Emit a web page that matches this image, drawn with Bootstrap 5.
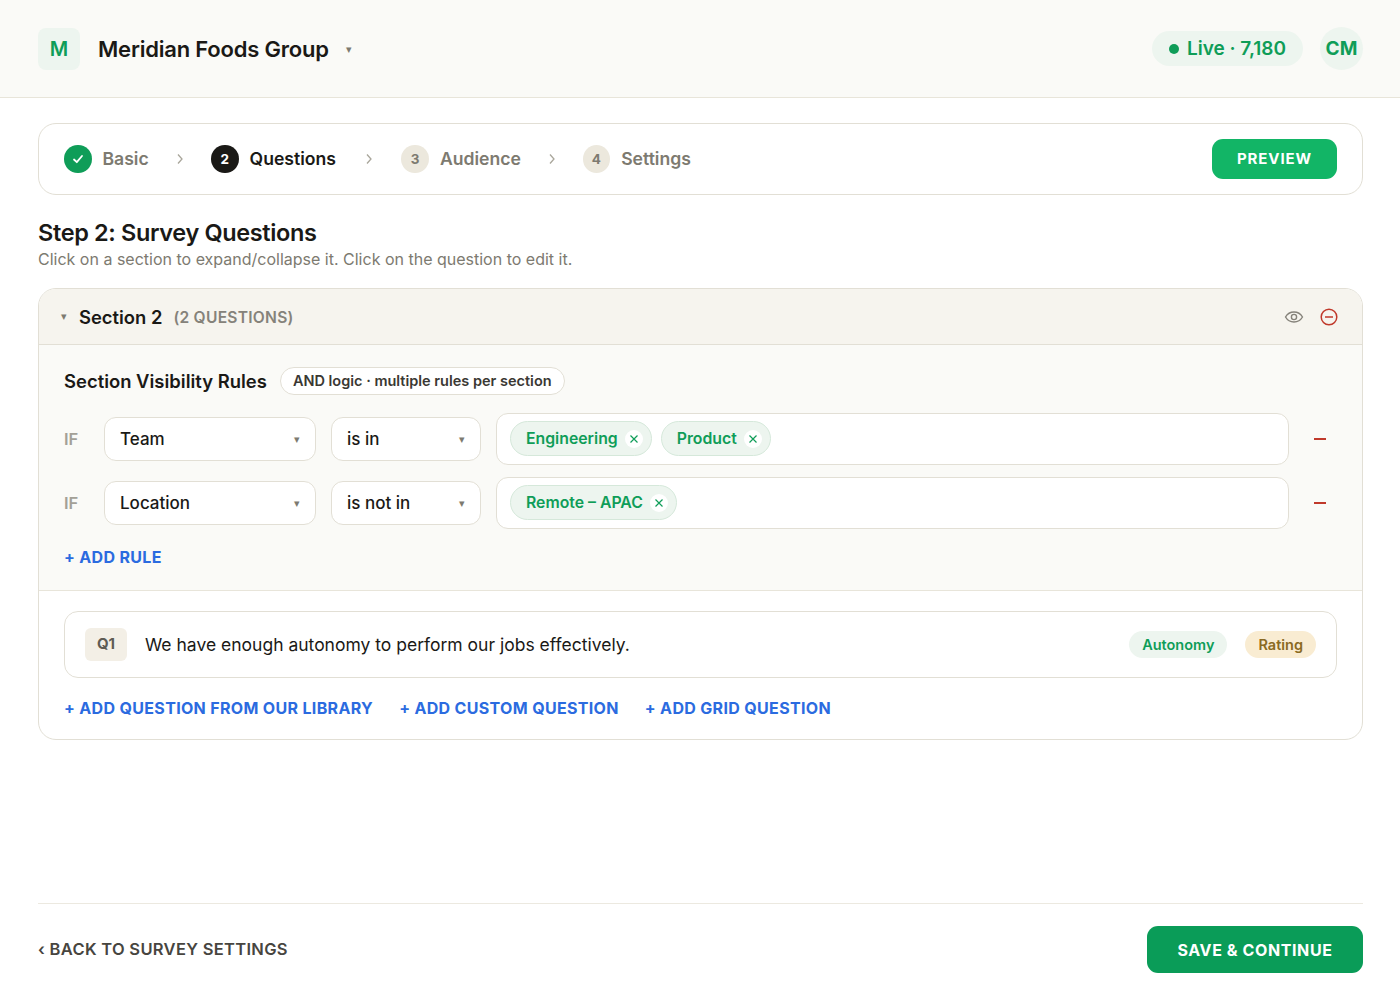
<!DOCTYPE html>
<html lang="en">
<head>
<meta charset="UTF-8">
<title>Survey Questions</title>
<meta name="viewport" content="width=device-width, initial-scale=1">
<link href="https://cdn.jsdelivr.net/npm/bootstrap@5.3.0/dist/css/bootstrap.min.css" rel="stylesheet">
<style>
body { font-family: Inter, "Liberation Sans", sans-serif; color: #1a1916; background: #fff; height: 1000px; overflow: hidden; }
.top-bar { height: 98px; background: #fafaf7; border-bottom: 1px solid #e8e5da; padding: 0 37px 0 38px; }
.logo-box { width: 42px; height: 42px; border-radius: 8px; background: #edf5ef; color: #0f9d58; font-size: 20px; font-weight: 600; }
.org-name { font-size: 22px; font-weight: 600; letter-spacing: -.2px; margin: 2px 0 0 18px; }
.caret-mini { color: #7d7a70; font-size: 11px; line-height: 1; }
.org-caret { margin: 2px 0 0 17px; }
.live-pill { height: 35px; border-radius: 18px; background: #edf5ef; color: #0f9d58; font-size: 19px; font-weight: 600; padding: 1px 17px 0; gap: 8px; margin-right: 17px; }
.live-dot { width: 10px; height: 10px; border-radius: 50%; background: #0f9d58; }
.avatar { width: 43px; height: 43px; border-radius: 50%; background: #edf5ef; color: #0f9d58; font-size: 19px; font-weight: 700; padding-top: 1px; }
.main-wrap { padding: 25px 37px 0 38px; }
.step-card { height: 72px; border: 1px solid #e2dfd5; border-radius: 18px; padding: 0 25px; }
.step-num { width: 27.5px; height: 28px; border-radius: 50%; font-size: 13.5px; font-weight: 700; background: #ece8dd; color: #7d7a70; flex: none; }
.step-num.is-done { background: #0f9d58; color: #fff; }
.step-num.is-now { background: #1a1916; color: #fff; }
.step-name { font-size: 17.6px; font-weight: 600; color: #7d7a70; margin: 0 0 0 11px; }
.step-name.is-now { color: #1a1916; }
.step-sep { color: #a9a69b; margin: 0 27.2px; width: 8px; }
.step-sep.sep-wide { margin: 0 28.7px; }
.step-sep.sep-tight { margin: 0 26.9px; }
.btn-preview { width: 125px; height: 40px; border-radius: 11px; background: #12b566; color: #fff; font-size: 15px; font-weight: 700; letter-spacing: .9px; border: 0; padding: 1px 0 0; }
.page-title { font-size: 23.5px; font-weight: 600; letter-spacing: -.36px; margin: 23px 0 0; line-height: 29px; }
.page-sub { font-size: 16px; color: #7d7a70; line-height: 24px; margin-bottom: 17px; }
.sec-card { border: 1px solid #e2dfd5; border-radius: 18px; height: 452px; overflow: hidden; }
.sec-head { height: 56px; background: #f6f4ee; border-bottom: 1px solid #e2dfd5; padding: 0 23px 0 22px; }
.sec-name { font-size: 18.4px; font-weight: 600; margin: 2px 0 0 12px; }
.sec-count { font-size: 15.6px; font-weight: 600; color: #85827a; letter-spacing: .25px; margin: 2px 0 0 11px; }
.rules-area { height: 246px; background: #fafaf7; border-bottom: 1px solid #e8e5da; padding: 22px 25px 0; }
.rules-head { margin-bottom: 17px; }
.rules-title { font-size: 18.45px; font-weight: 600; margin-top: 1px; }
.logic-pill { height: 28px; border: 1px solid #e2dfd5; border-radius: 14px; background: #fff; font-size: 14.5px; font-weight: 600; color: #3a3833; padding: 0 12px; margin-left: 13px; }
.rule-row { height: 52px; margin-bottom: 12px; }
.if-tag { width: 40px; font-size: 16.5px; font-weight: 600; color: #a3a097; flex: none; padding-top: 1px; }
.fake-select { height: 44px; border: 1px solid #e2dfd5; border-radius: 12px; background: #fff; font-size: 17px; font-weight: 500; padding: 2px 15px 0; flex: none; }
.sel-field { width: 212px; margin-right: 15px; }
.sel-op { width: 150px; margin-right: 15px; }
.tag-box { width: 793px; height: 52px; border: 1px solid #e2dfd5; border-radius: 12px; background: #fff; padding: 0 13px; gap: 9px; flex: none; }
.value-tag { height: 35px; border: 1px solid #d5e8da; border-radius: 18px; background: #edf5ef; color: #0f9d58; font-size: 15.8px; font-weight: 600; padding: 1px 8px 0 15px; gap: 7px; }
.tag-x { width: 18px; height: 18px; border-radius: 50%; background: #fff; }
.rule-del { width: 12px; height: 2px; background: #c0392b; margin: 1px 0 0 25px; }
.add-link { font-size: 16px; font-weight: 700; color: #2b6be0; letter-spacing: .33px; text-decoration: none; white-space: nowrap; }
.add-rule { display: inline-block; margin-top: 4px; }
.q-area { padding: 20px 25px 0; }
.q-row { height: 67px; border: 1px solid #e2dfd5; border-radius: 14px; padding: 0 20px; }
.q-num { width: 42px; height: 33px; border-radius: 6px; background: #f3efe6; color: #5f5c54; font-size: 15px; font-weight: 700; }
.q-text { font-size: 17.5px; margin: 2px 0 0 18px; }
.q-chip { height: 27px; border-radius: 14px; font-size: 14.5px; font-weight: 600; padding: 0 13px; }
.chip-green { background: #edf5ef; color: #0f9d58; margin-right: 18px; }
.chip-amber { background: #f9ecd2; color: #8a6a22; }
.q-links { gap: 26px; margin-top: 19px; line-height: 22px; }
.foot-bar { position: absolute; left: 38px; right: 37px; top: 903px; height: 70px; border-top: 1px solid #ece9e0; padding-top: 22px; }
.back-link { font-size: 16.5px; font-weight: 600; color: #47453f; letter-spacing: .3px; text-decoration: none; line-height: 47px; }
.btn-save { width: 216px; height: 47px; border-radius: 11px; background: #0a9c58; color: #fff; font-size: 16px; font-weight: 700; letter-spacing: .6px; border: 0; padding: 0; }
</style>
</head>
<body>

<header class="top-bar d-flex align-items-center">
  <div class="logo-box d-flex align-items-center justify-content-center">M</div>
  <div class="org-name">Meridian Foods Group</div>
  <span class="caret-mini org-caret">▾</span>
  <div class="ms-auto d-flex align-items-center">
    <div class="live-pill d-flex align-items-center"><span class="live-dot"></span>Live · 7,180</div>
    <div class="avatar d-flex align-items-center justify-content-center">CM</div>
  </div>
</header>

<div class="main-wrap">
  <div class="step-card d-flex align-items-center">
    <span class="step-num is-done d-flex align-items-center justify-content-center">
      <svg width="14" height="14" viewBox="0 0 14 14" fill="none" stroke="#fff" stroke-width="1.8" stroke-linecap="round" stroke-linejoin="round"><path d="M3 7.500 5.800 10.200 11 4"/></svg>
    </span>
    <span class="step-name">Basic</span>
    <svg class="step-sep" height="12" viewBox="0 0 8 12" fill="none" stroke="currentColor" stroke-width="1.3"><path d="M2 1.500 6 6 2 10.500"/></svg>
    <span class="step-num is-now d-flex align-items-center justify-content-center">2</span>
    <span class="step-name is-now">Questions</span>
    <svg class="step-sep sep-wide" height="12" viewBox="0 0 8 12" fill="none" stroke="currentColor" stroke-width="1.3"><path d="M2 1.500 6 6 2 10.500"/></svg>
    <span class="step-num d-flex align-items-center justify-content-center">3</span>
    <span class="step-name">Audience</span>
    <svg class="step-sep sep-tight" height="12" viewBox="0 0 8 12" fill="none" stroke="currentColor" stroke-width="1.3"><path d="M2 1.500 6 6 2 10.500"/></svg>
    <span class="step-num d-flex align-items-center justify-content-center">4</span>
    <span class="step-name">Settings</span>
    <button class="btn btn-preview ms-auto">PREVIEW</button>
  </div>

  <h1 class="page-title">Step 2: Survey Questions</h1>
  <div class="page-sub">Click on a section to expand/collapse it. Click on the question to edit it.</div>

  <div class="sec-card">
    <div class="sec-head d-flex align-items-center">
      <span class="caret-mini">▾</span>
      <span class="sec-name">Section 2</span>
      <span class="sec-count">(2 QUESTIONS)</span>
      <div class="ms-auto d-flex align-items-center" style="gap:15px">
        <svg width="20" height="20" viewBox="0 0 20 20" fill="none" stroke="#85827a" stroke-width="1.4"><path d="M1.500 10C3.500 6.600 6.500 5 10 5s6.500 1.600 8.500 5c-2 3.400-5 5-8.500 5s-6.500-1.600-8.500-5z"/><circle cx="10" cy="10" r="2.600"/></svg>
        <svg width="20" height="20" viewBox="0 0 20 20" fill="none" stroke="#c0392b" stroke-width="1.500"><circle cx="10" cy="10" r="7.800"/><path d="M6 10h8"/></svg>
      </div>
    </div>

    <div class="rules-area">
      <div class="rules-head d-flex align-items-center">
        <span class="rules-title">Section Visibility Rules</span>
        <span class="logic-pill d-flex align-items-center">AND logic · multiple rules per section</span>
      </div>

      <div class="rule-row d-flex align-items-center">
        <span class="if-tag">IF</span>
        <div class="fake-select sel-field d-flex align-items-center justify-content-between">Team<span class="caret-mini">▾</span></div>
        <div class="fake-select sel-op d-flex align-items-center justify-content-between">is in<span class="caret-mini">▾</span></div>
        <div class="tag-box d-flex align-items-center">
          <span class="value-tag d-flex align-items-center">Engineering<span class="tag-x d-flex align-items-center justify-content-center"><svg width="10" height="10" viewBox="0 0 10 10" stroke="#0f9d58" stroke-width="1.200"><path d="M1.500 1.500l7 7M8.500 1.500l-7 7"/></svg></span></span>
          <span class="value-tag d-flex align-items-center">Product<span class="tag-x d-flex align-items-center justify-content-center"><svg width="10" height="10" viewBox="0 0 10 10" stroke="#0f9d58" stroke-width="1.200"><path d="M1.500 1.500l7 7M8.500 1.500l-7 7"/></svg></span></span>
        </div>
        <span class="rule-del"></span>
      </div>

      <div class="rule-row d-flex align-items-center">
        <span class="if-tag">IF</span>
        <div class="fake-select sel-field d-flex align-items-center justify-content-between">Location<span class="caret-mini">▾</span></div>
        <div class="fake-select sel-op d-flex align-items-center justify-content-between">is not in<span class="caret-mini">▾</span></div>
        <div class="tag-box d-flex align-items-center">
          <span class="value-tag d-flex align-items-center">Remote – APAC<span class="tag-x d-flex align-items-center justify-content-center"><svg width="10" height="10" viewBox="0 0 10 10" stroke="#0f9d58" stroke-width="1.200"><path d="M1.500 1.500l7 7M8.500 1.500l-7 7"/></svg></span></span>
        </div>
        <span class="rule-del"></span>
      </div>

      <a href="#" class="add-link add-rule">+ ADD RULE</a>
    </div>

    <div class="q-area">
      <div class="q-row d-flex align-items-center">
        <span class="q-num d-flex align-items-center justify-content-center">Q1</span>
        <span class="q-text">We have enough autonomy to perform our jobs effectively.</span>
        <span class="q-chip chip-green d-flex align-items-center ms-auto">Autonomy</span>
        <span class="q-chip chip-amber d-flex align-items-center">Rating</span>
      </div>
      <div class="q-links d-flex">
        <a href="#" class="add-link">+ ADD QUESTION FROM OUR LIBRARY</a>
        <a href="#" class="add-link">+ ADD CUSTOM QUESTION</a>
        <a href="#" class="add-link">+ ADD GRID QUESTION</a>
      </div>
    </div>
  </div>
</div>

<footer class="foot-bar d-flex align-items-start justify-content-between">
  <a href="#" class="back-link">‹ BACK TO SURVEY SETTINGS</a>
  <button class="btn btn-save">SAVE &amp; CONTINUE</button>
</footer>

<script src="https://cdn.jsdelivr.net/npm/bootstrap@5.3.0/dist/js/bootstrap.bundle.min.js"></script>
</body>
</html>
